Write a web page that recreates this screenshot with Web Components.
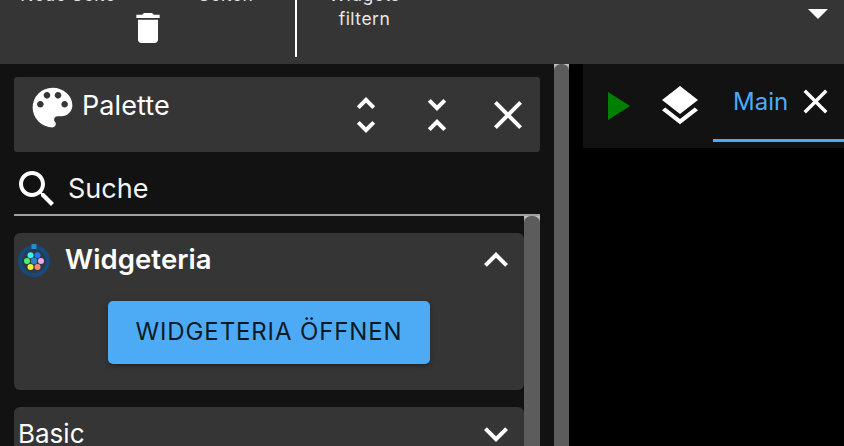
<!DOCTYPE html>
<html>
<head>
<meta charset="utf-8">
<style>
  html, body { margin: 0; height: 446px; overflow: hidden; background: #000; }
  body { font-family: Inter, "Liberation Sans", sans-serif; color: #fff; }
  .page { display: flex; flex-direction: column; height: 446px; overflow: hidden; }
  .main { display: flex; flex: 1; min-height: 0; }
</style>
</head>
<body>
<div class="page">
  <vis-toolbar></vis-toolbar>
  <div class="main">
    <vis-palette></vis-palette>
    <vis-scrollbar style="--sb-width:15px"></vis-scrollbar>
    <vis-view></vis-view>
  </div>
</div>
<script>
  //material icon paths used all over the page
  const ICONS = {
    trash: "M6 19c0 1.1.9 2 2 2h8c1.1 0 2-.9 2-2V7H6v12zM19 4h-3.5l-1-1h-5l-1 1H5v2h14V4z",
    palette: "M12 3a9 9 0 0 0 0 18c.83 0 1.5-.67 1.5-1.5 0-.39-.15-.74-.39-1.01-.23-.26-.38-.61-.38-.99 0-.83.67-1.5 1.5-1.5H16c2.76 0 5-2.24 5-5 0-4.42-4.03-8-9-8zm-5.5 9c-.83 0-1.5-.67-1.5-1.5S5.67 9 6.5 9 8 9.67 8 10.5 7.33 12 6.5 12zm3-4C8.67 8 8 7.33 8 6.5S8.67 5 9.5 5s1.5.67 1.5 1.5S10.33 8 9.5 8zm5 0c-.83 0-1.5-.67-1.5-1.5S13.67 5 14.5 5s1.5.67 1.5 1.5S15.33 8 14.5 8zm3 4c-.83 0-1.5-.67-1.5-1.5S16.67 9 17.5 9s1.5.67 1.5 1.5-.67 1.5-1.5 1.5z",
    more: "M12 5.83L15.17 9l1.41-1.41L12 3 7.41 7.59 8.83 9 12 5.83zm0 12.34L8.83 15l-1.41 1.41L12 21l4.59-4.59L15.17 15 12 18.17z",
    less: "M7.41 18.59L8.83 20 12 16.83 15.17 20l1.41-1.41L12 14l-4.59 4.59zm9.18-13.18L15.17 4 12 7.17 8.83 4 7.41 5.41 12 10l4.59-4.59z",
    close: "M19 6.41L17.59 5 12 10.59 6.41 5 5 6.41 10.59 12 5 17.59 6.41 19 12 13.41 17.59 19 19 17.59 13.41 12z",
    search: "M15.5 14h-.79l-.28-.27C15.41 12.59 16 11.11 16 9.5 16 5.91 13.09 3 9.5 3S3 5.91 3 9.5 5.91 16 9.5 16c1.61 0 3.09-.59 4.23-1.57l.27.28v.79l5 4.99L20.49 19l-4.99-5zm-6 0C7.01 14 5 11.99 5 9.5S7.01 5 9.5 5 14 7.01 14 9.5 11.99 14 9.5 14z",
    up: "M12 8l-6 6 1.41 1.41L12 10.83l4.59 4.58L18 14z",
    down: "M16.59 8.59L12 13.17 7.41 8.59 6 10l6 6 6-6z",
    play: "M8 5v14l11-7z",
    layers: "M11.99 18.54l-7.37-5.73L3 14.07l9 7 9-7-1.63-1.27-7.38 5.74zM12 16l7.36-5.73L21 9l-9-7-9 7 1.63 1.27L12 16z",
    drop: "M7 10l5 5 5-5z"
  };

  //small icon element, name and size come from attributes
  class VisIcon extends HTMLElement {
    connectedCallback() {
      const size = this.getAttribute("size") || 48;
      const color = this.getAttribute("color") || "#fff";
      const name = this.getAttribute("name");
      this.attachShadow({ mode: "open" });
      this.shadowRoot.innerHTML = `
        <style>:host{display:block;width:${size}px;height:${size}px;flex:none;} svg{display:block;}</style>
        <svg width="${size}" height="${size}" viewBox="0 0 24 24" fill="${color}"><path d="${ICONS[name]}"/></svg>`;
    }
  }
  customElements.define("vis-icon", VisIcon);

  const toolbarTemplate = document.createElement("template");
  toolbarTemplate.innerHTML = `
  <style>
  :host{ display:block; height:64px; flex:none; overflow:hidden; background:#353535; font-size:17.5px; letter-spacing:.5px; line-height:24px; color:#e8e8e8; }
  .bar{ display:flex; margin-top:-17px; height:81px; }
  .pages{ width:295px; height:74px; border-right:2px solid #fff; flex:none; }
  .row{ display:flex; height:25px; }
  .row span{ text-align:center; flex:none; }
  .new{ width:136px; }
  .list{ width:180px; }
  .trash{ margin-left:128px; }
  .filter{ width:135px; text-align:center; flex:none; }
  .spacer{ flex:1; }
  .drop{ margin-top:6px; padding-right:2px; }
  </style>
  <div class="bar">
    <div class="pages">
      <div class="row"><span class="new">Neue Seite</span><span class="list">Seiten</span></div>
      <vis-icon class="trash" name="trash" size="40"></vis-icon>
    </div>
    <div class="filter">Widgets<br>filtern</div>
    <div class="spacer"></div>
    <vis-icon class="drop" name="drop" size="48"></vis-icon>
  </div>`;
  class VisToolbar extends HTMLElement {
    constructor() {
      super();
      this.attachShadow({ mode: "open" });
      this.shadowRoot.appendChild(toolbarTemplate.content.cloneNode(true));
    }
  }
  customElements.define("vis-toolbar", VisToolbar);

  //thin grey scrollbar, the corners of the thumb show a lighter track
  class VisScrollbar extends HTMLElement {
    constructor() {
      super();
      this.attachShadow({ mode: "open" });
      this.shadowRoot.innerHTML = `
      <style>
      :host{ display:block; flex:none; width:var(--sb-width,16px); background:linear-gradient(#c8c8c8,#8a8a8a 6px,#5c5c5c 6px); }
      div{ height:100%; background:#5c5c5c; border-radius:7px 7px 0 0; }
      </style>
      <div></div>`;
    }
  }
  customElements.define("vis-scrollbar", VisScrollbar);

  //collapsible card with a title and an arrow
  const cardTemplate = document.createElement("template");
  cardTemplate.innerHTML = `
  <style>
  :host{ display:block; background:#353535; border-radius:6px; margin-bottom:17px; }
  .head{ display:flex; align-items:center; height:54px; padding-right:4px; }
  .title{ flex:1; font-size:26px; line-height:54px; }
  ::slotted([slot=icon]){ flex:none; }
  </style>
  <div class="head"><slot name="icon"></slot><div class="title"><slot name="title"></slot></div><vis-icon></vis-icon></div>
  <slot></slot>`;
  class VisCard extends HTMLElement {
    constructor() {
      super();
      this.attachShadow({ mode: "open" });
      const content = cardTemplate.content.cloneNode(true);
      //name has to be there before the icon gets connected
      content.querySelector("vis-icon").setAttribute("name", this.getAttribute("arrow") || "down");
      this.shadowRoot.appendChild(content);
    }
  }
  customElements.define("vis-card", VisCard);

  const paletteTemplate = document.createElement("template");
  paletteTemplate.innerHTML = `
  <style>
  :host{ display:flex; flex-direction:column; flex:none; width:554px; background:#121212; box-sizing:border-box; padding:13px 14px 0; overflow:hidden; }
  .head{ display:flex; align-items:center; height:75px; flex:none; background:#353535; border-radius:3px; box-sizing:border-box; }
  .logo{ margin:-15px 0 0 12px; }
  .name{ font-size:27px; margin:-19px 0 0 3px; flex:1; letter-spacing:.1px; }
  .btns{ display:flex; margin-right:8px; }
  .btns vis-icon:nth-child(1){ margin-right:23px; }
  .btns vis-icon:nth-child(2){ margin-right:23px; }
  .search{ display:flex; align-items:center; height:64px; box-sizing:border-box; flex:none; border-bottom:2px solid #a0a0a0; padding-top:12px; }
  .search vis-icon{ margin-left:-1px; }
  .search span{ font-size:27px; margin:-2px 0 0 7px; color:#f4f4f4; }
  .scroll{ display:flex; flex:1; min-height:0; overflow:hidden; }
  .cards{ width:510px; flex:none; padding-top:17px; }
  .bold{ display:inline-block; font-weight:600; font-size:27.5px; letter-spacing:.1px; line-height:52px; vertical-align:top; }
  .plain{ margin-left:4px; }
  .body{ display:flex; justify-content:center; padding:14px 0 26px; }
  </style>
  <div class="head">
    <vis-icon class="logo" name="palette" size="53"></vis-icon>
    <div class="name">Palette</div>
    <div class="btns">
      <vis-icon name="more"></vis-icon>
      <vis-icon name="less"></vis-icon>
      <vis-icon name="close"></vis-icon>
    </div>
  </div>
  <div class="search"><vis-icon name="search"></vis-icon><span>Suche</span></div>
  <div class="scroll">
    <div class="cards">
      <vis-card arrow="up">
        <svg slot="icon" width="32" height="34" viewBox="0 0 32 34" style="margin-left:4px;margin-right:15px">
          <circle cx="16" cy="18" r="14" fill="#2b3a48" stroke="#174a7c" stroke-width="4"/>
          <rect x="13.5" y="1" width="5" height="5" fill="#2a8ac8"/>
          <circle cx="16" cy="18" r="3.2" fill="#2a86c8"/>
          <circle cx="12.5" cy="12.2" r="3" fill="#40f0f0"/>
          <circle cx="19.5" cy="12.2" r="3" fill="#1e78f0"/>
          <circle cx="9" cy="18" r="3" fill="#4cf06a"/>
          <circle cx="23" cy="18" r="3" fill="#f0a8e8"/>
          <circle cx="12.5" cy="24" r="3" fill="#f0f040"/>
          <circle cx="19.5" cy="24" r="3" fill="#ff8a70"/>
        </svg>
        <span slot="title" class="bold">Widgeteria</span>
        <div class="body"><vis-button>WIDGETERIA ÖFFNEN</vis-button></div>
      </vis-card>
      <vis-card arrow="down"><span slot="title" class="plain">Basic</span></vis-card>
    </div>
    <vis-scrollbar></vis-scrollbar>
  </div>`;
  class VisPalette extends HTMLElement {
    constructor() {
      super();
      this.attachShadow({ mode: "open" });
      this.shadowRoot.appendChild(paletteTemplate.content.cloneNode(true));
    }
  }

  class VisButton extends HTMLElement {
    constructor() {
      super();
      this.attachShadow({ mode: "open" });
      this.shadowRoot.innerHTML = `
      <style>
      :host{ display:block; width:322px; height:63px; }
      button{ all:unset; display:flex; align-items:center; justify-content:center; box-sizing:border-box; width:100%; height:100%; background:#4dabf5; border-radius:5px; color:#0c1a26; font:400 24px Inter,"Liberation Sans",sans-serif; letter-spacing:.87px; padding-bottom:3px; box-shadow:0 3px 3px -2px rgba(0,0,0,.2),0 2px 4px rgba(0,0,0,.14),0 1px 8px rgba(0,0,0,.12); }
      </style>
      <button><slot></slot></button>`;
    }
  }
  customElements.define("vis-button", VisButton);
  customElements.define("vis-palette", VisPalette);

  const viewTemplate = document.createElement("template");
  viewTemplate.innerHTML = `
  <style>
  :host{ display:block; flex:1; background:#000; padding-left:14px; }
  .tabs{ display:flex; align-items:flex-start; height:84px; background:#121212; }
  .tabs > vis-icon{ margin-top:18px; }
  .play{ margin-left:9px; }
  .layers{ margin-left:16px; }
  .tab{ display:flex; align-items:center; margin-left:9px; height:75px; flex:1; border-bottom:3px solid #4dabf5; padding-left:20px; color:#4dabf5; font-size:24px; }
  .tab vis-icon{ margin-left:7px; }
  </style>
  <div class="tabs">
    <vis-icon class="play" name="play" color="#008000"></vis-icon>
    <vis-icon class="layers" name="layers"></vis-icon>
    <div class="tab"><span>Main</span><vis-icon name="close" size="41"></vis-icon></div>
  </div>`;
  class VisView extends HTMLElement {
    constructor() {
      super();
      this.attachShadow({ mode: "open" });
      this.shadowRoot.appendChild(viewTemplate.content.cloneNode(true));
    }
  }
  customElements.define("vis-view", VisView);
</script>
</body>
</html>
